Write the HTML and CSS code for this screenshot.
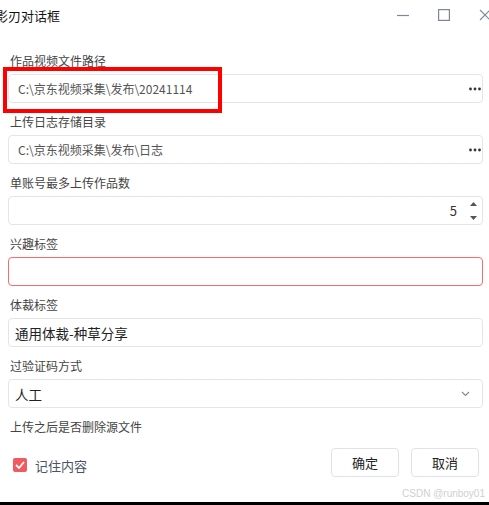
FILE: index.html
```html
<!DOCTYPE html>
<html lang="zh-CN">
<head>
    <meta charset="UTF-8">
    <title>影刃对话框</title>
    <link rel="stylesheet" href="styles.css">
</head>
<body>
    <div class="titlebar">
        <span class="title">影刃对话框</span>
        <div class="win-btns">
            <svg width="12" height="12" viewBox="0 0 12 12"><path d="M0 6.5h12" stroke="#7d869a" stroke-width="1.2"/></svg>
            <svg width="12" height="12" viewBox="0 0 12 12"><rect x="0.6" y="0.6" width="10.8" height="10.8" fill="none" stroke="#7d869a" stroke-width="1.2"/></svg>
            <svg width="12" height="12" viewBox="0 0 12 12"><path d="M1 1l10 10M11 1L1 11" stroke="#7d869a" stroke-width="1.1"/></svg>
        </div>
    </div>

    <div class="form">
        <div class="field">
            <div class="label">作品视频文件路径</div>
            <div class="input input-path">
                <span class="value">C:\京东视频采集\发布\20241114</span>
                <svg class="more" width="12" height="4" viewBox="0 0 12 4"><circle cx="1.5" cy="2" r="1.4"/><circle cx="6" cy="2" r="1.4"/><circle cx="10.5" cy="2" r="1.4"/></svg>
            </div>
            <div class="highlight"></div>
        </div>

        <div class="field">
            <div class="label">上传日志存储目录</div>
            <div class="input input-path">
                <span class="value">C:\京东视频采集\发布\日志</span>
                <svg class="more" width="12" height="4" viewBox="0 0 12 4"><circle cx="1.5" cy="2" r="1.4"/><circle cx="6" cy="2" r="1.4"/><circle cx="10.5" cy="2" r="1.4"/></svg>
            </div>
        </div>

        <div class="field">
            <div class="label">单账号最多上传作品数</div>
            <div class="input input-number">
                <span class="number">5</span>
                <svg class="spinner" width="7" height="20" viewBox="0 0 7 20"><path d="M3.5 1L7 5H0z M0 15h7l-3.5 4z" fill="#555"/></svg>
            </div>
        </div>

        <div class="field">
            <div class="label">兴趣标签</div>
            <div class="input input-error"></div>
        </div>

        <div class="field">
            <div class="label">体裁标签</div>
            <div class="input input-big">
                <span class="value">通用体裁-种草分享</span>
            </div>
        </div>

        <div class="field">
            <div class="label">过验证码方式</div>
            <div class="input input-big">
                <span class="value">人工</span>
                <svg class="chevron" width="9" height="6" viewBox="0 0 9 6"><path d="M1 1l3.5 3.5L8 1" fill="none" stroke="#888" stroke-width="1.1"/></svg>
            </div>
        </div>

        <div class="label">上传之后是否删除源文件</div>

        <div class="footer">
            <label class="remember">
                <span class="checkbox">
                    <svg width="10" height="8" viewBox="0 0 10 8"><path d="M1 4l3 3 5-6" fill="none" stroke="#fff" stroke-width="1.8"/></svg>
                </span>
                记住内容
            </label>
            <div class="buttons">
                <button class="btn">确定</button>
                <button class="btn">取消</button>
            </div>
        </div>
    </div>

    <div class="watermark">CSDN @runboy01</div>
    <div class="bottom-line"></div>
</body>
</html>
```

FILE: styles.css
```css
body {
    margin: 0;
    width: 489px;
    height: 505px;
    overflow: hidden;
    background: #fff;
    color: #333;
    font-family: "Noto Sans CJK SC", "Liberation Sans", sans-serif;
}

.titlebar {
    height: 30px;
    display: flex;
    align-items: center;
}
.title {
    flex: 1;
    margin-left: -5px;
    font-size: 13px;
    color: #111;
}
.win-btns {
    display: flex;
    gap: 29px;
    margin-right: -2px;
}

.form {
    padding: 21px 6px 0 8px;
}
.field {
    position: relative;
    margin-bottom: 9px;
}
.label {
    padding-left: 2px;
    margin-bottom: 3px;
    font-size: 12px;
    line-height: 20px;
    color: #444;
}

.input {
    height: 29px;
    box-sizing: border-box;
    display: flex;
    align-items: center;
    border: 1px solid #e3e5eb;
    border-radius: 4px;
    background: #fff;
}
.input .value {
    flex: 1;
}
.input-path {
    padding: 0 1px 0 9px;
    font-size: 12px;
    color: #555;
}
.more {
    fill: #333;
}
.input-number {
    justify-content: flex-end;
    padding-right: 5px;
    font-size: 13px;
}
.number {
    margin-right: 13px;
    color: #333;
}
.input-error {
    border-color: #f56c6c;
}
.input-big {
    padding: 0 12px 0 6px;
    font-size: 13.5px;
    color: #222;
}

.highlight {
    position: absolute;
    left: -5px;
    top: 16px;
    width: 219px;
    height: 46px;
    box-sizing: border-box;
    border: 4px solid #ff0000;
}

.footer {
    margin-top: 11px;
    display: flex;
    align-items: center;
    justify-content: space-between;
}
.remember {
    display: flex;
    align-items: center;
    gap: 8px;
    margin: 5px 0 0 5px;
    font-size: 13px;
    color: #4b5467;
}
.checkbox {
    width: 14px;
    height: 14px;
    border-radius: 2px;
    background: #f15a5f;
    display: flex;
    align-items: center;
    justify-content: center;
}
.buttons {
    display: flex;
    gap: 12px;
    margin-right: 4px;
}
.btn {
    width: 68px;
    height: 29px;
    border: 1px solid #e0e2e8;
    border-radius: 4px;
    background: #fff;
    color: #222;
    font-family: inherit;
    font-size: 13px;
    cursor: pointer;
}
.btn:hover {
    background: #f5f6f8;
}

.watermark {
    margin-top: 11px;
    padding-right: 4px;
    text-align: right;
    font-family: "Liberation Sans", sans-serif;
    font-size: 10px;
    line-height: 12px;
    color: #cfcfcf;
}
.bottom-line {
    margin-top: 2px;
    height: 3px;
    background: #000;
}
```
